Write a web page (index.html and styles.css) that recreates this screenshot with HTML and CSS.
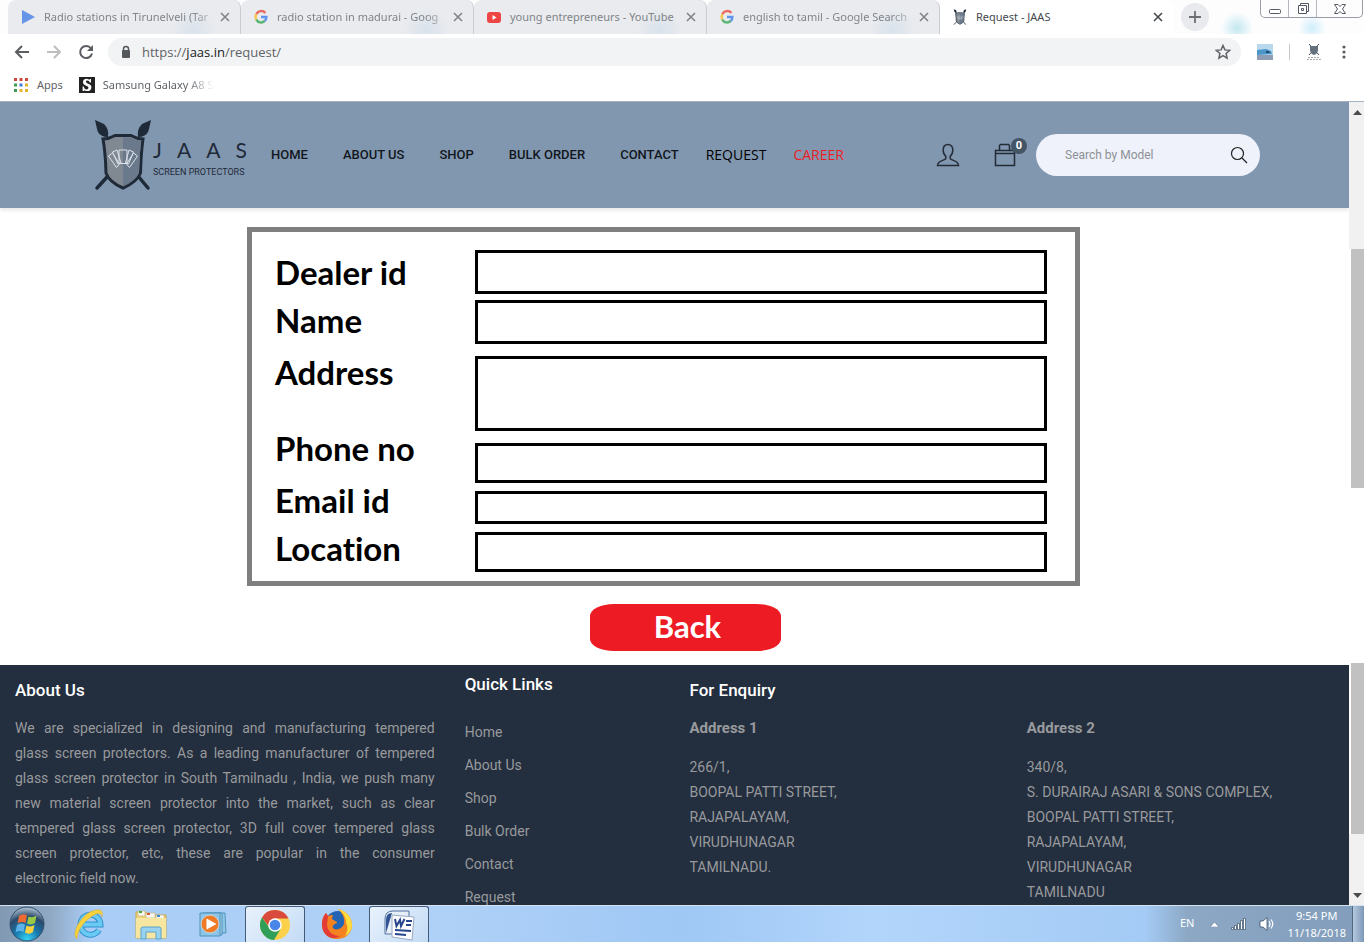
FILE: index.html
```html
<!DOCTYPE html>
<html lang="en">
<head>
<meta charset="utf-8">
<title>Request - JAAS</title>
<link rel="stylesheet" href="styles.css">
</head>
<body>
<svg class="defs" aria-hidden="true">
  <symbol id="close" viewBox="0 0 10 10"><path d="M1 1l8 8M9 1l-8 8" stroke="currentColor" stroke-width="1.6"/></symbol>
  <symbol id="google" viewBox="0 0 16 16" fill="none"><g stroke-width="2.4"><path d="M12.4 4A5.4 5.4 0 0 0 3.3 5.4" stroke="#ea6a60"/><path d="M3.3 5.4a5.4 5.4 0 0 0 0 5.2" stroke="#f4c64c"/><path d="M3.3 10.6a5.4 5.4 0 0 0 8.4 1.4" stroke="#5bb574"/><path d="M8 8h5.4a5.4 5.4 0 0 1-1.7 4" stroke="#5f93ec"/></g></symbol>
  <symbol id="crest" viewBox="0 0 58 72"><g stroke="#1f2a38" stroke-linecap="round"><path d="M9 12l6 8M49 12l-6 8" stroke-width="2"/><path d="M14 57L3 69M44 57l10 12" stroke-width="3.5"/></g><path d="M1 1l9 4q5 5 4 12l-3 1q-7-2-8-8zM57 1l-9 4q-5 5-4 12l3 1q7-2 8-8z" fill="#1f2a38"/><path d="M9 20q6 0 12-3.500h16q6 3.500 12 3.500-2 14-2.500 34Q43 63 29 69 15 63 12 54 11.500 34 9 20z" fill="#808892" stroke="#1f2a38" stroke-width="3"/><path d="M29 18.500v49q13-6 16-14.500.5-17 2-31.500-6-.5-11-3z" fill="#6e7c8d"/><path d="M29 18.500v49q13-6 16-14.500.500-17 2-31.500-6-.5-11-3z" fill="#66768a" opacity=".5"/><path d="M14.500 37l4-3 7 11-3 3.500zM18.500 33l4.500-2 4 13-3 1zM25 31h8v13.500h-8zM35 31l4.500 2-5 12-3-1zM39.500 34l4 3-8 11.500-3-3.500z" fill="none" stroke="#dde3ea"/></symbol>
</svg>

<header class="chrome">
  <div class="tabstrip">
    <div class="tab"><svg class="i16" viewBox="0 0 16 16"><path d="M2 1l13 7-13 7z" fill="#6695e8"/></svg><span class="tab-title fade">Radio stations in Tirunelveli (Tar</span><button class="plain" aria-label="Close tab"><svg class="i10"><use href="#close"/></svg></button></div>
    <div class="tab"><svg class="i16"><use href="#google"/></svg><span class="tab-title fade">radio station in madurai - Goog</span><button class="plain" aria-label="Close tab"><svg class="i10"><use href="#close"/></svg></button></div>
    <div class="tab"><svg class="i16" viewBox="0 0 16 16"><rect x="1" y="3" width="14" height="11" rx="3" fill="#ef4444"/><path d="M6.500 6l4 2.500-4 2.500z" fill="#fff"/></svg><span class="tab-title">young entrepreneurs - YouTube</span><button class="plain" aria-label="Close tab"><svg class="i10"><use href="#close"/></svg></button></div>
    <div class="tab"><svg class="i16"><use href="#google"/></svg><span class="tab-title fade">english to tamil - Google Search</span><button class="plain" aria-label="Close tab"><svg class="i10"><use href="#close"/></svg></button></div>
    <div class="tab tab-active"><svg class="i16"><use href="#crest"/></svg><span class="tab-title">Request - JAAS</span><button class="plain" aria-label="Close tab"><svg class="i10"><use href="#close"/></svg></button></div>
    <button class="plain new-tab" aria-label="New tab"><svg width="14" height="14" viewBox="0 0 14 14"><path d="M7 1v12M1 7h12" stroke="#6c7075" stroke-width="1.8"/></svg></button>
    <div class="window-controls">
      <button class="plain" aria-label="Minimize"><svg width="14" height="16" viewBox="0 0 14 16"><rect x="1.500" y="8.500" width="11" height="4" rx="1" fill="#fff" stroke="#555a66"/></svg></button>
      <button class="plain" aria-label="Restore"><svg width="14" height="16" viewBox="0 0 14 16"><path d="M4.500 4.500v-2h8v8h-2M2.500 4.500h8v8h-8zM5.500 7.500h2v2h-2z" fill="#fff" stroke="#555a66"/></svg></button>
      <button class="plain" aria-label="Close"><svg width="14" height="16" viewBox="0 0 14 16"><path d="M1.500 3.500h3.500l2 2 2-2h3.500l-3 4.500 3 4.500H9l-2-2-2 2H1.500l3-4.500z" fill="#fff" stroke="#555a66"/></svg></button>
    </div>
  </div>
  <div class="toolbar">
    <button class="plain" aria-label="Back"><svg class="i16" viewBox="0 0 16 16"><path d="M15 8H2M8 2L2 8l6 6" fill="none" stroke="#5a5d61" stroke-width="2"/></svg></button>
    <button class="plain" aria-label="Forward"><svg class="i16" viewBox="0 0 16 16"><path d="M1 8h13M8 2l6 6-6 6" fill="none" stroke="#bcbec0" stroke-width="2"/></svg></button>
    <button class="plain" aria-label="Reload"><svg class="i16" viewBox="0 0 16 16"><path d="M13 4.500A6 6 0 1 0 14 9.500" fill="none" stroke="#5a5d61" stroke-width="2"/><path d="M15 1v6H9z" fill="#5a5d61"/></svg></button>
    <div class="omnibox">
      <svg width="10" height="14" viewBox="0 0 10 14"><path d="M2.500 6V4a2.500 2.500 0 0 1 5 0v2" fill="none" stroke="#55585c" stroke-width="1.500"/><rect x="1" y="5" width="8" height="8" rx="1" fill="#55585c"/></svg>
      <span class="url">https://<b>jaas.in</b>/request/</span>
      <button class="plain" aria-label="Bookmark this page"><svg class="i16" viewBox="0 0 16 16"><path d="M8 1.500l1.900 4.400 4.800.4-3.600 3.200 1 4.700L8 11.700l-4.100 2.500 1-4.700-3.600-3.200 4.800-.4z" fill="none" stroke="#5f6368" stroke-width="1.500"/></svg></button>
    </div>
    <svg class="i16" viewBox="0 0 16 16"><path d="M0 0h16v16H0z" fill="#b8d8ee"/><path d="M0 6l9-1 5 2 1 3-15 1z" fill="#4b96c9"/><path d="M0 11h16v5H0z" fill="#8e9db3"/><path d="M9 7l3 0 1 2H9z" fill="#274b70"/></svg>
    <span class="divider"></span>
    <svg class="i16" viewBox="0 0 16 16"><path d="M3 0l10 11M13 0L3 11" stroke="#49525d"/><path d="M4 2h8v5q-1 3-4 4-3-1-4-4z" fill="#66717e"/><path d="M2 13.500h12M1 15.500h14" stroke="#a7a7a7" stroke-dasharray="2 1"/></svg>
    <button class="plain menu" aria-label="Menu"><svg width="4" height="16" viewBox="0 0 4 16" fill="#5a5d61"><circle cx="2" cy="3" r="1.600"/><circle cx="2" cy="8" r="1.600"/><circle cx="2" cy="13" r="1.600"/></svg></button>
  </div>
  <nav class="bookmarks" aria-label="Bookmarks">
    <a href="#apps"><svg class="i16" viewBox="0 0 16 16"><path d="M1 1h3v3H1zM6.500 1h3v3h-3zM12 1h3v3h-3z" fill="#d0493f"/><path d="M1 6.500h3v3H1z" fill="#3c9a57"/><path d="M6.500 6.500h3v3h-3z" fill="#3f7fd9"/><path d="M12 6.500h3v3h-3zM6.500 12h3v3h-3zM12 12h3v3h-3z" fill="#e3b22f"/><path d="M1 12h3v3H1z" fill="#3c9a57"/></svg>Apps</a>
    <a href="#samsung"><span class="s-icon"><svg class="i16" viewBox="0 0 16 16"><path d="M12 5V2h-1l-.6.700C9.500 2 8.500 1.800 7.600 1.800 5.400 1.800 4 3.200 4 5c0 4.400 5.400 3 5.400 5.800 0 1-.7 1.700-1.800 1.700-1.600 0-2.500-1.100-2.800-3H3.600V14h1.100l.7-.8c.7.600 1.700.9 2.800.9 2.400 0 4.200-1.300 4.200-3.700C12.400 6 7 7.300 7 4.700c0-.8.600-1.300 1.300-1.300 1.300 0 2.100.7 2.500 2.200H12z" fill="#fff"/></svg></span><span class="fade">Samsung Galaxy A8 S</span></a>
  </nav>
</header>

<div class="viewport">
  <div class="page">
    <header class="site-header">
      <a class="logo" href="#home" aria-label="JAAS Screen Protectors">
        <svg width="58" height="72"><use href="#crest"/></svg>
        <span class="logo-text"><span class="logo-name"><span>J</span> <span>A</span> <span>A</span> <span>S</span></span><span class="logo-tag">SCREEN PROTECTORS</span></span>
      </a>
      <nav class="site-nav" aria-label="Main">
        <a href="#home">HOME</a>
        <a href="#about">ABOUT US</a>
        <a href="#shop">SHOP</a>
        <a href="#bulk">BULK ORDER</a>
        <a href="#contact">CONTACT</a>
        <a class="alt" href="#request">REQUEST</a>
        <a class="alt career" href="#career">CAREER</a>
      </nav>
      <div class="header-tools">
        <a class="tool" href="#account" aria-label="Account"><svg width="24" height="24" viewBox="0 0 24 24"><path d="M12 1.500c-3 0-4.800 2.200-4.800 5.500 0 2.800 1 5 2.600 6.300v2.200C9.800 17.500 1.500 17 1.500 22.500h21c0-5.500-8.300-5-8.300-7v-2.200C15.800 12 16.800 9.800 16.800 7c0-3.300-1.800-5.500-4.800-5.500z" fill="none" stroke="#222b36" stroke-width="1.500"/></svg></a>
        <a class="tool cart" href="#cart" aria-label="Cart"><svg width="22" height="24" viewBox="0 0 22 24"><path d="M1.500 7.500h19v15h-19zM1.500 10.500h19M5.500 7.500V2.500l1-1h8l1 1v5" fill="none" stroke="#222b36" stroke-width="1.500"/></svg><span class="badge">0</span></a>
        <form class="search">
          <input type="search" aria-label="Search by Model" placeholder="Search by Model">
          <button class="plain" type="button" aria-label="Search"><svg width="18" height="18" viewBox="0 0 18 18"><circle cx="7.500" cy="7.500" r="6" fill="none" stroke="#222" stroke-width="1.200"/><path d="M12 12l5 5" stroke="#222" stroke-width="1.300"/></svg></button>
        </form>
      </div>
    </header>

    <main class="content">
      <form class="request" id="request-form">
        <div class="labels">
          <label for="dealer">Dealer id</label>
          <label for="name">Name</label>
          <label class="label-address" for="address">Address</label>
          <label for="phone">Phone no</label>
          <label class="label-email" for="email">Email id</label>
          <label for="location">Location</label>
        </div>
        <div class="fields">
          <input class="h-lg" id="dealer" type="text">
          <input class="h-lg gap-sm" id="name" type="text">
          <textarea class="gap-lg" id="address"></textarea>
          <input class="h-md gap-lg" id="phone" type="tel">
          <input class="h-sm" id="email" type="email">
          <input class="h-md" id="location" type="text">
        </div>
      </form>
      <div class="actions"><button class="back" type="button">Back</button></div>
    </main>

    <footer class="footer">
      <section class="about">
        <h2>About Us</h2>
        <p>We are specialized in designing and manufacturing tempered<br>
        glass screen protectors. As a leading manufacturer of tempered<br>
        glass screen protector in South Tamilnadu , India, we push many<br>
        new material screen protector into the market, such as clear<br>
        tempered glass screen protector, 3D full cover tempered glass<br>
        screen protector, etc, these are popular in the consumer
        <span class="last-line">electronic field now.</span></p>
      </section>
      <section class="links">
        <h2>Quick Links</h2>
        <ul>
          <li><a href="#home">Home</a></li>
          <li><a href="#about">About Us</a></li>
          <li><a href="#shop">Shop</a></li>
          <li><a href="#bulk">Bulk Order</a></li>
          <li><a href="#contact">Contact</a></li>
          <li><a href="#request">Request</a></li>
        </ul>
      </section>
      <section class="enquiry">
        <h2>For Enquiry</h2>
        <div class="addresses">
          <div><h3>Address 1</h3><address>266/1,<br>BOOPAL PATTI STREET,<br>RAJAPALAYAM,<br>VIRUDHUNAGAR<br>TAMILNADU.</address></div>
          <div><h3>Address 2</h3><address>340/8,<br>S. DURAIRAJ ASARI &amp; SONS COMPLEX,<br>BOOPAL PATTI STREET,<br>RAJAPALAYAM,<br>VIRUDHUNAGAR<br>TAMILNADU</address></div>
        </div>
      </section>
    </footer>
  </div>
  <div class="scrollbar" aria-hidden="true">
    <span class="arrow"><svg width="9" height="5" viewBox="0 0 9 5"><path d="M0 5l4.500-5L9 5z" fill="#4b4b4b"/></svg></span>
    <span class="track track-top"></span>
    <span class="thumb thumb-top"></span>
    <span class="blank"></span>
    <span class="thumb thumb-bottom"></span>
    <span class="track track-bottom"></span>
    <span class="arrow"><svg width="9" height="5" viewBox="0 0 9 5"><path d="M0 0l4.500 5L9 0z" fill="#4b4b4b"/></svg></span>
  </div>
</div>

<footer class="taskbar">
  <button class="plain start" aria-label="Start"><svg width="36" height="36" viewBox="0 0 36 36"><defs><radialGradient id="orb" cx=".5" cy=".95" r=".9"><stop offset="0" stop-color="#35d3f5"/><stop offset=".4" stop-color="#1878ad"/><stop offset=".75" stop-color="#2b4a6b"/><stop offset="1" stop-color="#9fb3c6"/></radialGradient></defs><circle cx="18" cy="18" r="17" fill="url(#orb)" stroke="#33506d"/><path d="M10 10q4-3 8-.5L16.500 17q-4-2-8 .5z" fill="#ee6a33"/><path d="M19.500 10.500q4 2 8-1L26 17q-4 2.500-8 .5z" fill="#9ac943"/><path d="M8 19q4-2.500 8-.5L14.500 26q-4-2-8 .5z" fill="#5cb2ea"/><path d="M17.500 19.500q4 2 8-.5L24 26q-4 3-8 .5z" fill="#fbd13f"/></svg></button>
  <button class="plain task" aria-label="Internet Explorer"><svg width="32" height="32" viewBox="0 0 32 32"><path d="M26 22a10 10 0 1 1 1.500-5.500H10" fill="none" stroke="#2f91cf" stroke-width="6"/><path d="M26 22a10 10 0 1 1 1.500-5.500H10" fill="none" stroke="#6bcaf3" stroke-width="4"/><path d="M4 31C-2 27 6 10 17 4c7-3.500 14-4 12 5 0-5-6-4-11 0C10 14 4 24 4 31z" fill="#f7d23e" stroke="#d5a92c" stroke-width=".5"/></svg></button>
  <button class="plain task" aria-label="File Explorer"><svg width="34" height="32" viewBox="0 0 34 32"><path d="M2 4h10l2 3h18v23H2z" fill="#eed47a" stroke="#c8a94d"/><path d="M4 3h7v5H4zM12 5h9v5h-9zM22 7h8v4h-8z" fill="#f8f7ef" stroke="#c0b27b" stroke-width=".6"/><path d="M5 3h3v2H5z" fill="#48a53f"/><path d="M13 5h3v2h-3z" fill="#d75333"/><path d="M23 7h3v2h-3z" fill="#4188cf"/><path d="M2 10h30v20H2z" fill="#f7e6a0"/><path d="M7 31V20l2-1h16l2 1v11h-5v-7H12v7z" fill="#9ad3ef" stroke="#5aa4cc"/></svg></button>
  <button class="plain task" aria-label="Media Player"><svg width="28" height="28" viewBox="0 0 28 28"><path d="M8 3h18l1 20H9z" fill="#8fc6e6" stroke="#5697bd"/><path d="M4 3h19v22H4z" fill="#a6d3ec" stroke="#4f92bb"/><path d="M1 3h20v23H1z" fill="#8cc5e7" stroke="#4f92bb"/><circle cx="11" cy="14" r="9" fill="#ef7b26" stroke="#c9d7e2"/><path d="M7.500 8.500l10 5.500-10 5.500z" fill="#fff"/></svg></button>
  <button class="plain task task-open" aria-label="Google Chrome"><svg width="30" height="30" viewBox="0 0 30 30"><circle cx="15" cy="15" r="15" fill="#fbd04b"/><path d="M2 7.500A15 15 0 0 1 28.500 8.500H15l-6 8z" fill="#d9493c"/><path d="M2 7.500A15 15 0 0 0 14 30l6.500-11-11-1z" fill="#2f9e58"/><circle cx="15" cy="15" r="6.800" fill="#fff"/><circle cx="15" cy="15" r="5.300" fill="#4a86e8"/></svg></button>
  <button class="plain task" aria-label="Firefox"><svg width="32" height="32" viewBox="0 0 32 32"><circle cx="17" cy="16" r="13" fill="#2464b4"/><path d="M17 1c5 1 14 6 14 16 0 8-6 14-15 14C7 31 1 25 1 17 1 11 3 7 5 5l2 3c2-1 4-1 5-1 0 2-2 3 0 5 2 1 4 1 4 3-2 1-5 2-4 5 3 3 9 1 11-4 1-7-2-11-6-15z" fill="#f58220"/><path d="M17 1c5 1 14 6 14 16 0 5-3 9-7 11 3-5 3-9 1-13 0-6-3-10-8-14z" fill="#fbdc3c"/><path d="M1 17C1 11 3 7 5 5l2 3-1 9c1 7 6 11 13 11-9 6-18-2-18-11z" fill="#e33b35"/></svg></button>
  <button class="plain task task-open" aria-label="Word"><svg width="32" height="32" viewBox="0 0 32 32"><path d="M2 25V10Q2 2 10 2h16v23z" fill="#e6eef8" stroke="#51719f"/><path d="M3 24V11Q3 4 9 4z" fill="#315494"/><path d="M9 6l22 2-2 23-20-3z" fill="#fdfdff" stroke="#9aaac2"/><path d="M12 10l1.500 7L17 11l1 6 3.500-7" fill="none" stroke="#26458c" stroke-width="2"/><path d="M23 12h6M23 16h5M12 21l16 1M12 25l11 1" stroke="#26458c" stroke-width="2"/></svg></button>
  <div class="tray">
    <span class="lang">EN</span>
    <svg width="9" height="5" viewBox="0 0 9 5"><path d="M0 5l4.500-5L9 5z" fill="#fff" stroke="#4d6786" stroke-width=".5"/></svg>
    <svg width="16" height="14" viewBox="0 0 16 14"><path d="M.5 10.500h2v2h-2zM3.500 8.500h2v4h-2zM6.500 6.500h2v6h-2zM9.500 3.500h2v9h-2zM12.500 1.500h2v11h-2z" fill="#fff" stroke="#3c5068" stroke-width=".7"/></svg>
    <svg width="16" height="16" viewBox="0 0 16 16"><path d="M1 5h3l4-3.500v13L4 11H1z" fill="#fff" stroke="#3c5068" stroke-width=".8"/><path d="M10 5q2 3 0 6M12 3.500q3.500 4.500 0 9" fill="none" stroke="#fff" stroke-width="1.200"/></svg>
    <span class="clock">9:54 PM<br>11/18/2018</span>
  </div>
  <button class="plain show-desktop" aria-label="Show desktop"></button>
</footer>
</body>
</html>
```
FILE: styles.css
```css
* { box-sizing: border-box; }

body {
  margin: 0;
  height: 100vh;
  display: flex;
  flex-direction: column;
  overflow: hidden;
  background: #fff;
  font-family: Roboto, "Liberation Sans", sans-serif;
}

a { color: inherit; text-decoration: none; }
svg { display: block; flex: none; }
.defs { position: absolute; width: 0; height: 0; }
.i16 { width: 16px; height: 16px; }
.i10 { width: 10px; height: 10px; }

.plain {
  display: flex;
  align-items: center;
  justify-content: center;
  margin: 0;
  padding: 0;
  border: 0;
  background: none;
  color: inherit;
}

/* Browser window */
.chrome {
  flex: none;
  border-bottom: 1px solid #a3b2c1;
  color: #5f6368;
  font: 11px/16px "Noto Sans", sans-serif;
}

.tabstrip {
  display: flex;
  align-items: center;
  height: 34px;
  padding-left: 8px;
  background:
    radial-gradient(circle at 1237px 28px, #c3e8f0 0, transparent 16px),
    radial-gradient(circle at 1312px 28px, #cfeefa 0, transparent 14px),
    #fdfdfe;
}

.tab {
  display: flex;
  flex: 0 1 233px;
  align-items: center;
  height: 34px;
  padding: 0 10px 0 12px;
  border-right: 1px solid #c9ccd1;
  border-radius: 8px 8px 0 0;
  background: radial-gradient(circle at 80% 90%, #d9e2ec 0, transparent 22px), #e9ebee;
  color: #808489;
  min-width: 0;
}

.tab-active { border: 0; background: #fff; color: #45494d; }
.tab-title { flex: 1; margin-left: 8px; white-space: nowrap; }

.fade {
  white-space: nowrap;
  -webkit-mask-image: linear-gradient(to right, #000 calc(100% - 28px), transparent);
  mask-image: linear-gradient(to right, #000 calc(100% - 28px), transparent);
}

.new-tab {
  width: 28px;
  height: 28px;
  margin-left: 8px;
  border-radius: 50%;
  background: #e8eaed;
}

.window-controls {
  display: flex;
  align-self: flex-start;
  width: 103px;
  height: 18px;
  margin: 0 1px 0 auto;
  border: 1px solid #9a9da5;
  border-top: 0;
  border-radius: 0 0 5px 5px;
}
.window-controls button { flex: 3; border-left: 1px solid #b5b8be; }
.window-controls button:first-child { border: 0; }
.window-controls button:last-child { flex: 5; }

.toolbar {
  display: flex;
  align-items: center;
  gap: 16px;
  height: 36px;
  padding: 0 18px 0 14px;
}

.omnibox {
  display: flex;
  flex: 1;
  align-items: center;
  gap: 11px;
  height: 28px;
  margin-left: -2px;
  padding: 0 10px 0 13px;
  border-radius: 14px;
  background: #f1f3f4;
  font: 13px/16px "Open Sans", sans-serif;
}
.url { flex: 1; }
.url b { color: #202124; font-weight: 400; }
.divider { width: 1px; height: 16px; background: #c5c8cb; }
.menu { margin-left: 4px; }

.bookmarks {
  display: flex;
  gap: 16px;
  height: 31px;
  padding: 0 13px 2px;
}
.bookmarks a { display: flex; align-items: center; gap: 8px; }
.s-icon { background: #222; }

.viewport { display: flex; flex: 1; min-height: 0; }
.page { display: flex; flex: 1; flex-direction: column; min-width: 0; overflow: hidden; }

/* Site header */
.site-header {
  display: flex;
  flex: none;
  align-items: center;
  height: 106px;
  padding: 0 89px 0 94px;
  background: #8197b0;
  box-shadow: 0 2px 4px rgba(0, 0, 0, .1);
  color: #12171d;
}

.logo { display: flex; align-items: center; gap: 1px; color: #1f2a38; }
.logo-text { display: flex; flex-direction: column; width: 94px; padding-top: 10px; }
.logo-name {
  display: flex;
  justify-content: space-between;
  font: 21px/24px Lato, sans-serif;
}
.logo-tag {
  font: 9px/20px Roboto, sans-serif;
  white-space: nowrap;
}

.site-nav {
  display: flex;
  gap: 35px;
  margin-left: 24px;
  font-size: 13px;
  font-weight: 500;
  line-height: 20px;
  white-space: nowrap;
}
.site-nav .alt {
  margin-left: -8px;
  font-family: "Open Sans", sans-serif;
  font-size: 14px;
  font-weight: 400;
  color: #000;
}
.site-nav .career { color: #ed1c24; }

.header-tools { display: flex; align-items: center; gap: 34px; margin-left: auto; }
.cart { position: relative; }
.badge {
  position: absolute;
  top: -5px;
  right: -11px;
  width: 16px;
  border-radius: 8px;
  background: #445566;
  color: #fff;
  font-size: 11px;
  font-weight: 700;
  line-height: 16px;
  text-align: center;
}

.search {
  display: flex;
  align-items: center;
  width: 224px;
  height: 42px;
  margin-left: -14px;
  padding: 0 12px 0 29px;
  border-radius: 21px;
  background: #eff2fa;
}
.search input {
  flex: 1;
  min-width: 0;
  padding: 0;
  border: 0;
  background: none;
  font: 12px/20px Roboto, sans-serif;
}
.search input::placeholder { color: #8d9196; }

/* Request form */
.content { flex: none; padding: 19px 269px 14px 247px; }

.request {
  display: flex;
  border: 5px solid #7f7f7f;
  padding: 16px 28px 9px 23px;
}

.labels {
  display: flex;
  flex: 0 0 200px;
  flex-direction: column;
  color: #000;
  font: 700 33px/48px Lato, sans-serif;
  font-variant-ligatures: none;
}
.label-address { margin: 4px 0 28px; }
.label-email { margin-top: 4px; }

.fields { display: flex; flex: 1; flex-direction: column; padding-top: 2px; }
.fields input, .fields textarea {
  display: block;
  width: 100%;
  margin: 8px 0 0;
  padding: 0 8px;
  border: 3px solid #000;
  border-radius: 0;
  background: #fff;
  font: 20px Lato, sans-serif;
}
.fields textarea { height: 75px; resize: none; }
.fields .h-lg { height: 44px; }
.fields .h-md { height: 40px; }
.fields .h-sm { height: 33px; }
.fields .gap-sm { margin-top: 6px; }
.fields .gap-lg { margin-top: 12px; }
.fields input:first-child { margin-top: 0; }

.actions { padding: 18px 0 0 343px; }
.back {
  display: block;
  width: 191px;
  height: 47px;
  padding: 0 0 4px 4px;
  border: 0;
  border-radius: 24px / 12px;
  background: #ed1c24;
  color: #fff;
  font: 700 31px/40px Lato, sans-serif;
}

/* Site footer */
.footer {
  display: grid;
  flex: 1 0 auto;
  grid-template-columns: 4fr 2fr 6fr;
  background: #232e3e;
  color: #989a9d;
  font-size: 14px;
  line-height: 25px;
}
.footer section { padding: 15px 15px 0; min-width: 0; }
.footer .links { padding-top: 9px; }
.footer h2 { margin: 0 0 16px; color: #fff; font-size: 17px; font-weight: 500; line-height: 20px; }
.footer p { margin: 0; text-align: justify; text-align-last: justify; }
.last-line { display: block; text-align-last: left; }
.footer .links h2 { margin-bottom: 22px; }
.footer ul { margin: 0; padding: 0; list-style: none; line-height: 33px; }
.addresses { display: grid; grid-template-columns: 1fr 1fr; gap: 30px; }
.footer h3 { margin: 0 0 14px; font-size: 15px; font-weight: 700; line-height: 25px; }
.footer address { font-style: normal; white-space: nowrap; }

/* Scrollbar */
.scrollbar { display: flex; flex: none; flex-direction: column; width: 15px; background: #fff; }
.arrow { display: flex; flex: none; align-items: center; justify-content: center; height: 20px; padding-left: 2px; background: #f1f1f1; }
.track { background: #f1f1f1; }
.track-top { flex: 127; }
.thumb { margin-left: 2px; background: #c1c1c1; }
.thumb-top { flex: 239; }
.blank { flex: 176; }
.thumb-bottom { flex: 171; }
.track-bottom { flex: 51; }

/* Taskbar */
.taskbar {
  display: flex;
  flex: none;
  align-items: center;
  gap: 2px;
  height: 37px;
  border-top: 1px solid #d5e3f0;
  background: linear-gradient(to right, #8199b3 0, #8fa8c3 50px, #a9cdf6 90px, #b0d1f7 430px, #9fc8f5 50%, #b2d5fb 64%, #a4cbf5 84%, #8ca8c5 87%, #829dbb 100%);
}
.start { width: 54px; height: 36px; margin-right: 3px; }
.task { width: 60px; height: 36px; }
.task-open {
  border: 1px solid #445c79;
  border-bottom: 0;
  border-radius: 3px 3px 0 0;
  background: linear-gradient(135deg, #e9f2fc, #c3dbf5);
}
.tray {
  display: flex;
  align-items: center;
  gap: 12px;
  margin-left: auto;
  color: #fff;
  font: 11px/17px "Noto Sans", sans-serif;
}
.lang { margin-right: 4px; padding-bottom: 4px; }
.clock { text-align: center; white-space: nowrap; }
.show-desktop {
  width: 12px;
  height: 36px;
  margin-left: 4px;
  border-left: 1px solid #4f6883;
  background: linear-gradient(to right, #b5c9de, #7c98b8);
}
```
